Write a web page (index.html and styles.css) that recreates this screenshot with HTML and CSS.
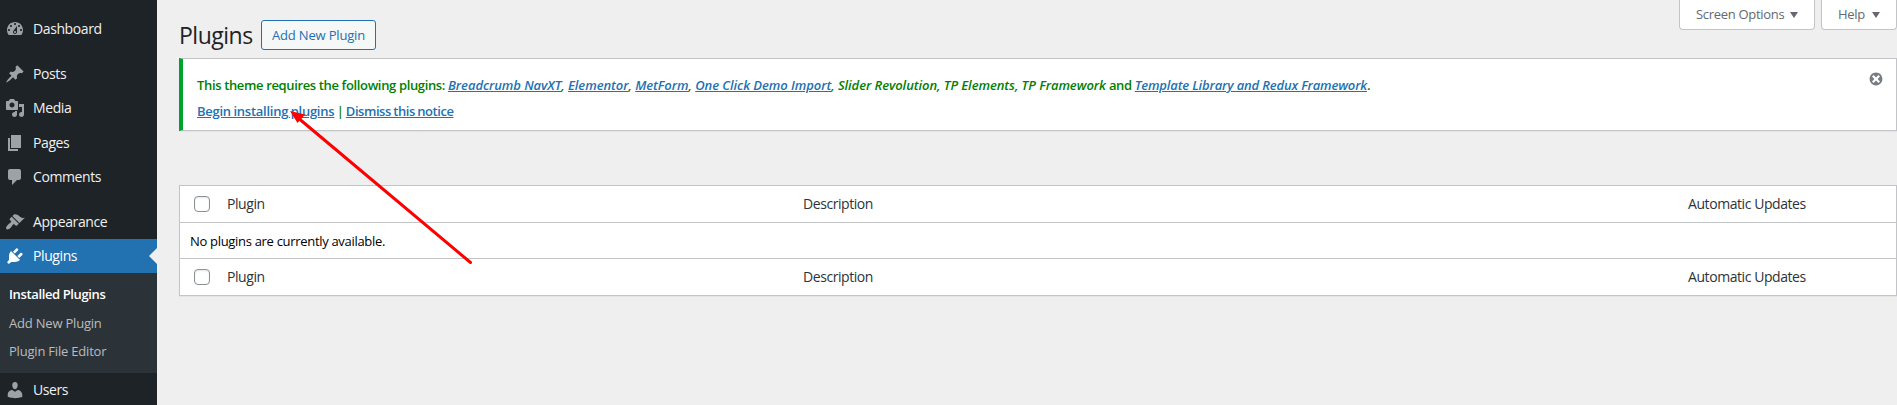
FILE: index.html
```html
<!DOCTYPE html>
<html lang="en">
<head>
<meta charset="utf-8">
<title>Plugins</title>
<link rel="stylesheet" href="styles.css">
</head>
<body>
<div class="admin">
  <nav class="sidebar">
    <a class="item"><svg class="icon" viewBox="0 0 20 20"><path d="M3.76 16h12.48c1.1-1.37 1.76-3.11 1.76-5 0-4.42-3.58-8-8-8s-8 3.58-8 8c0 1.89.66 3.63 1.76 5zM10 4c.55 0 1 .45 1 1s-.45 1-1 1-1-.45-1-1 .45-1 1-1zM6 6c.55 0 1 .45 1 1s-.45 1-1 1-1-.45-1-1 .45-1 1-1zm8 0c.55 0 1 .45 1 1s-.45 1-1 1-1-.45-1-1 .45-1 1-1zm-5.37 5.55L12 7v6c0 1.1-.9 2-2 2s-2-.9-2-2c0-.57.24-1.08.63-1.45zM4 10c.55 0 1 .45 1 1s-.45 1-1 1-1-.45-1-1 .45-1 1-1zm12 0c.55 0 1 .45 1 1s-.45 1-1 1-1-.45-1-1 .45-1 1-1zm-5 3c0-.55-.45-1-1-1s-1 .45-1 1 .45 1 1 1 1-.45 1-1z"/></svg><span>Dashboard</span></a>
    <div class="separator"></div>
    <div class="group">
    <a class="item"><svg class="icon" viewBox="0 0 20 20"><path d="M10.44 3.02l1.82-1.82 6.36 6.35-1.83 1.82c-1.05-.68-2.48-.57-3.41.36l-.75.75c-.92.93-1.04 2.35-.35 3.41l-1.83 1.82-2.41-2.41-2.8 2.79c-.42.42-3.38 2.71-3.8 2.29s1.86-3.39 2.28-3.81l2.79-2.79L4.1 9.36l1.83-1.82c1.05.69 2.48.57 3.4-.36l.75-.75c.93-.92 1.05-2.35.36-3.41z"/></svg><span>Posts</span></a>
    <a class="item"><svg class="icon" viewBox="0 0 20 20"><path d="M13 11V4c0-.55-.45-1-1-1h-1.67L9 1H5L3.67 3H2c-.55 0-1 .45-1 1v7c0 .55.45 1 1 1h10c.55 0 1-.45 1-1zM7 4.5c1.38 0 2.5 1.12 2.5 2.5S8.38 9.5 7 9.5 4.5 8.38 4.5 7 5.62 4.5 7 4.5zM14 6h5v10.5c0 1.38-1.12 2.5-2.5 2.5S14 17.88 14 16.5s1.12-2.5 2.5-2.5c.17 0 .34.02.5.05V9h-3V6zm-4 8.05V13h2v3.5c0 1.38-1.12 2.5-2.5 2.5S7 17.88 7 16.5 8.12 14 9.5 14c.17 0 .34.02.5.05z"/></svg><span>Media</span></a>
    <a class="item"><svg class="icon" viewBox="0 0 20 20"><path d="M6 15V2h10v13H6zm-1 1h8v2H3V5h2v11z"/></svg><span>Pages</span></a>
    <a class="item"><svg class="icon" viewBox="0 0 20 20"><path d="M5 2h9c1.1 0 2 .9 2 2v7c0 1.1-.9 2-2 2h-2l-5 5v-5H5c-1.1 0-2-.9-2-2V4c0-1.1.9-2 2-2z"/></svg><span>Comments</span></a>
    </div>
    <a class="item"><svg class="icon" viewBox="0 0 20 20"><path d="M14.48 11.06L7.41 3.99l1.5-1.5c.5-.56 2.3-.47 3.51.32 1.21.8 1.43 1.28 2.91 2.1 1.18.64 2.45 1.26 4.45.85zm-.71.71L6.7 4.7 4.93 6.47c-.39.39-.39 1.02 0 1.41l1.06 1.06c.39.39.39 1.03 0 1.42-.6.6-1.43 1.11-2.21 1.69-.35.26-.7.53-1.01.84C1.43 14.23.4 16.08 1.4 17.07c.99 1 2.84-.03 4.18-1.36.31-.31.58-.66.85-1.02.57-.78 1.08-1.61 1.69-2.21.39-.39 1.02-.39 1.41 0l1.06 1.06c.39.39 1.02.39 1.41 0z"/></svg><span>Appearance</span></a>
    <a class="item current"><svg class="icon" viewBox="0 0 20 20"><path d="M13.11 4.36L9.87 7.6 8 5.73l3.24-3.24c.35-.34 1.05-.2 1.56.32.52.51.66 1.21.31 1.55zm-8 1.77l.91-1.12 9.01 9.01-1.19.84c-.71.71-2.63 1.16-3.82 1.16H6.14L4.9 17.26c-.59.59-1.54.59-2.12 0-.59-.58-.59-1.53 0-2.12l1.24-1.24v-3.88c0-1.13.4-3.19 1.09-3.89zm7.26 3.97l3.24-3.24c.34-.35 1.04-.21 1.55.31.52.51.66 1.21.31 1.55l-3.24 3.25z"/></svg><span>Plugins</span></a>
    <div class="submenu">
      <a class="sub active"><span>Installed Plugins</span></a>
      <a class="sub"><span>Add New Plugin</span></a>
      <a class="sub"><span>Plugin File Editor</span></a>
    </div>
    <a class="item"><svg class="icon" viewBox="0 0 20 20"><path d="M10 9.25c-2.27 0-2.73-3.44-2.73-3.44C7 4.02 7.82 2 9.97 2c2.16 0 2.98 2.02 2.71 3.81 0 0-.41 3.44-2.68 3.44zm0 2.57L12.72 10c2.39 0 4.52 2.33 4.52 4.53v2.49s-3.65 1.13-7.24 1.13c-3.65 0-7.24-1.13-7.24-1.13v-2.49c0-2.25 1.94-4.48 4.47-4.48z"/></svg><span>Users</span></a>
  </nav>
  <main class="content">
    <header class="top">
      <div class="heading"><h1>Plugins</h1><a class="button"><span>Add New Plugin</span></a></div>
      <div class="tabs">
        <a class="tab options"><span>Screen Options</span><svg class="caret" viewBox="0 0 8 6"><path d="M0 0h8L4 6z"/></svg></a>
        <a class="tab help"><span>Help</span><svg class="caret" viewBox="0 0 8 6"><path d="M0 0h8L4 6z"/></svg></a>
      </div>
    </header>
    <section class="notice">
      <div class="message">
        <p class="required">This theme requires the following plugins: <em><a>Breadcrumb NavXT</a>, <a>Elementor</a>, <a>MetForm</a>, <a>One Click Demo Import</a>, Slider Revolution, TP Elements, TP Framework</em> and <em class="bundled"><a>Template Library and Redux Framework</a></em>.</p>
        <p class="actions"><a class="install">Begin installing plugins</a> | <a>Dismiss this notice</a></p>
      </div>
      <svg class="dismiss" viewBox="0 0 20 20"><path d="M10 2c4.42 0 8 3.58 8 8s-3.58 8-8 8-8-3.58-8-8 3.58-8 8-8zm5 11l-3-3 3-3-2-2-3 3-3-3-2 2 3 3-3 3 2 2 3-3 3 3z"/></svg>
    </section>
    <section class="table">
      <div class="row head"><i class="check"></i><span>Plugin</span><span>Description</span><span>Automatic Updates</span></div>
      <div class="row empty"><span>No plugins are currently available.</span></div>
      <div class="row foot"><i class="check"></i><span>Plugin</span><span>Description</span><span>Automatic Updates</span></div>
    </section>
  </main>
  <svg class="arrow" viewBox="0 0 190 160"><path class="shaft" d="M183.500 154.500L10 9"/><path class="tip" d="M3 3L18 6.500l-3 3.500-4.500 5z"/></svg>
</div>
</body>
</html>
```
FILE: styles.css
```css
* { box-sizing: border-box; }
body { margin: 0; background: #efefef; color: #3c434a; font: 13px/18px "Open Sans", "Noto Sans", sans-serif; overflow: hidden; }
h1, p { margin: 0; }
.admin { position: relative; display: flex; width: 1897px; height: 405px; overflow: hidden; }
.sidebar { flex: none; width: 157px; padding-top: 12px; background: #1d2327; }
.item { display: flex; align-items: center; height: 34px; padding-left: 5px; gap: 8px; color: #f0f0f1; font-size: 14px; letter-spacing: -0.4px; }
.icon { flex: none; width: 20px; height: 20px; fill: #9ca2a7; }
.separator { height: 11px; }
.group { height: 148px; }
.group .item { height: 34.3px; }
.current { position: relative; background: #2271b1; color: #fff; }
.current .icon { fill: #fff; }
.current::after { content: ""; position: absolute; right: 0; top: 9px; border: 8px solid transparent; border-right-color: #efefef; border-left: 0; }
.submenu { height: 100px; padding: 7px 0 0 9px; background: #2c3338; }
.sub { display: flex; align-items: center; height: 28px; color: #b9bcbf; letter-spacing: -0.2px; }
.sub.active { height: 28px; margin-bottom: 1px; color: #fff; font-weight: 600; letter-spacing: -0.37px; }
.content { flex: 1; padding-left: 22px; }
.top { display: flex; justify-content: space-between; height: 58px; }
.heading { display: flex; align-items: flex-start; padding-top: 20px; }
h1 { width: 82px; color: #1d2327; font-size: 23px; font-weight: 400; line-height: 30px; letter-spacing: -0.5px; }
.button { display: flex; align-items: center; justify-content: center; width: 115px; height: 30px; border: 1px solid #2271b1; border-radius: 3px; background: #f6f7f7; color: #2271b1; letter-spacing: -0.17px; }
.tabs { display: flex; gap: 6px; }
.tab { display: flex; align-items: center; justify-content: space-between; height: 30px; padding: 0 16px 6px; border: 1px solid #c3c4c7; border-top: 0; border-radius: 0 0 4px 4px; background: #fff; color: #646970; letter-spacing: -0.3px; white-space: nowrap; }
.options { width: 136px; }
.help { width: 76px; }
.caret { flex: none; width: 8px; height: 6px; margin-top: 6px; fill: #646970; }
.tab span { margin-top: 5px; }
.notice { display: flex; justify-content: space-between; height: 73px; padding: 17px 12px 0 14px; border: 1px solid #c3c4c7; border-left: 4px solid #00a32a; background: #fff; box-shadow: 0 1px 1px rgba(0, 0, 0, .04); }
.message { color: green; font-weight: 600; letter-spacing: -0.36px; white-space: nowrap; }
.message em { letter-spacing: -0.06px; }
.message .bundled { letter-spacing: -0.15px; }
.message a { color: #2271b1; text-decoration: underline; }
.actions { margin-top: 8px; letter-spacing: -0.45px; word-spacing: -0.5px; }
.install { letter-spacing: -0.26px; }
.dismiss { flex: none; width: 16px; height: 16px; margin-top: -5px; fill: #787c82; }
.table { margin-top: 54px; border: 1px solid #c3c4c7; background: #fff; box-shadow: 0 1px 1px rgba(0, 0, 0, .04); }
.row { display: grid; grid-template-columns: 33px 576px 885px 1fr; align-items: center; height: 36px; padding-left: 14px; color: #2c3338; font-size: 14px; letter-spacing: -0.43px; }
.head { height: 37px; border-bottom: 1px solid #c3c4c7; }
.empty { display: flex; padding-left: 10px; border-bottom: 1px solid #c3c4c7; color: #000; font-size: 13px; letter-spacing: -0.31px; }
.check { width: 16px; height: 16px; border: 1px solid #8c8f94; border-radius: 4px; background: #fff; box-shadow: inset 0 1px 2px rgba(0, 0, 0, .1); }
.arrow { position: absolute; left: 287px; top: 108px; width: 190px; height: 160px; }
.shaft { fill: none; stroke: #f00; stroke-width: 3; stroke-linecap: round; }
.tip { fill: #f00; }
```
